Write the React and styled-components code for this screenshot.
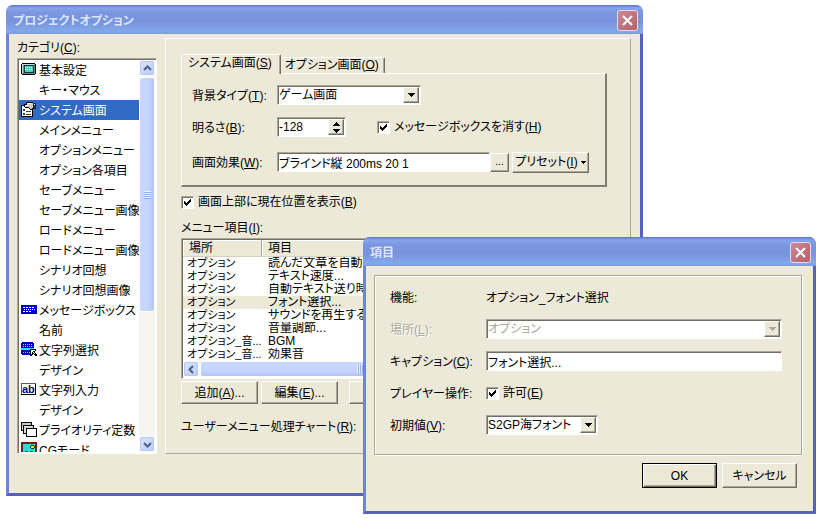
import React from "react";
import styled, { createGlobalStyle, css } from "styled-components";

const categories = [
  { label: "基本設定", icon: "screen" },
  { label: "キー・マウス" },
  { label: "システム画面", icon: "props", selected: true },
  { label: "メインメニュー" },
  { label: "オプションメニュー" },
  { label: "オプション各項目" },
  { label: "セーブメニュー" },
  { label: "セーブメニュー画像" },
  { label: "ロードメニュー" },
  { label: "ロードメニュー画像" },
  { label: "シナリオ回想" },
  { label: "シナリオ回想画像" },
  { label: "メッセージボックス", icon: "message" },
  { label: "名前" },
  { label: "文字列選択", icon: "choice" },
  { label: "デザイン" },
  { label: "文字列入力", icon: "input" },
  { label: "デザイン" },
  { label: "プライオリティ定数", icon: "layers" },
  { label: "CGモード", icon: "picture" },
];

const menuItems = [
  ["オプション", "読んだ文章を自動的"],
  ["オプション", "テキスト速度..."],
  ["オプション", "自動テキスト送り時"],
  ["オプション", "フォント選択..."],
  ["オプション", "サウンドを再生する"],
  ["オプション", "音量調節..."],
  ["オプション_音...", "BGM"],
  ["オプション_音...", "効果音"],
];

const ScreenIcon = () => (
  <svg width="16" height="16" shapeRendering="crispEdges">
    <path d="M1 2h13v1h1v10h-1v1H1v-1H0V3h1z" fill="#000" />
    <path d="M1 3h13v10H1z" fill="#5f8f8f" />
    <path d="M1 3h12v1H2v8H1z" fill="#c8dcdc" />
    <path d="M3 4h10v8H3z" fill="#103838" />
    <path d="M4 5h8v6H4z" fill="#4fd0c0" />
    <path d="M4 6.5h8M4 8.5h8" stroke="#b8fff0" strokeDasharray="1 1" />
  </svg>
);

const PropsIcon = () => (
  <svg width="16" height="16" shapeRendering="crispEdges">
    <path d="M0 4h12v12H0z" fill="#000" />
    <path d="M1 5h10v10H1z" fill="#fff" />
    <path d="M2 8h2v2H2z M5 10h5v1H5z M2 12h2v2H2z M5 13h5v1H5z" fill="#404040" />
    <path d="M5 1h7v1h1v6h-2v1H9V8H8V7H4V6H3V3h2z" fill="#000" />
    <path d="M6 2h6v5h-1v1H9V7H8V6H4V4h2z" fill="#d0ccc0" />
    <path d="M6 2h4v1H6z M4 4h4v1H4z" fill="#fff" />
    <path d="M12 2h3v6h-3z" fill="#102850" />
    <path d="M13 3h1v1h-1z" fill="#fff" />
  </svg>
);

const MessageIcon = () => (
  <svg width="16" height="16" shapeRendering="crispEdges">
    <path d="M0 4h16v9H0z" fill="#0000b8" />
    <path d="M2 6.5h12" stroke="#fff" strokeDasharray="2 1" />
    <path d="M3 8.5h11" stroke="#fff" strokeDasharray="1 1" />
    <path d="M2 10.5h9" stroke="#fff" strokeDasharray="2 1" />
  </svg>
);

const ChoiceIcon = () => (
  <svg width="16" height="16" shapeRendering="crispEdges">
    <path d="M1 1h11v1h1v11h-1v1H1v-1H0V2h1z" fill="#0000c0" />
    <path d="M2 3.5h10M2 5.5h10M2 11.5h8" stroke="#a8c8ff" strokeDasharray="1 1" />
    <path d="M0 7h13v2H0z" fill="#30e0e8" />
    <path d="M9 8h6v2h-1v2h1v1h1v2h-2v-1h-1v-1h-1v1h-1v1H9z" fill="#000" />
    <path d="M10 9h4v1h-2v1h1v1h1v1h-1v-1h-1v-1h-1v2h-1z" fill="#fff" />
  </svg>
);

const InputIcon = () => (
  <svg width="16" height="16" shapeRendering="crispEdges">
    <path d="M0 2h15v12H0z" fill="#000" />
    <path d="M1 3h13v10H1z" fill="#fff" />
    <path d="M0 2h15v1H1v10H0z" fill="#606060" />
    <text x="1" y="12" fontFamily="Liberation Sans" fontWeight="700" fontSize="11" fill="#000080">
      ab
    </text>
  </svg>
);

const LayersIcon = () => (
  <svg width="16" height="16" shapeRendering="crispEdges" stroke="#000">
    <path d="M.5 1.5h10v8H.5z" fill="#c8c8c8" />
    <path d="M2.5 4.5h10v8h-10z" fill="#d8d8d8" />
    <path d="M5.500 7.500h10v8h-10z" fill="#fff" />
  </svg>
);

const PictureIcon = () => (
  <svg width="16" height="16" shapeRendering="crispEdges">
    <path d="M0 1h16v15H0z" fill="#7c1818" />
    <path d="M2 3h12v13H2z" fill="#28dcdc" />
    <path d="M10 4h3v1h1v2h-1v1h-3V7H9V5h1z" fill="#203020" />
    <path d="M10 5h3v2h-3z" fill="#e8e830" />
    <path d="M4 10h3v1h2v-1h3v2h2v4H2v-4h2z" fill="#107030" />
  </svg>
);

const icons = {
  screen: ScreenIcon,
  props: PropsIcon,
  message: MessageIcon,
  choice: ChoiceIcon,
  input: InputIcon,
  layers: LayersIcon,
  picture: PictureIcon,
};

const Chevron = ({ d }) => (
  <svg width="9" height="9">
    <path d={d} fill="none" stroke="#4d6185" strokeWidth="2" />
  </svg>
);

const Triangle = ({ up }) => (
  <svg width="7" height="4" shapeRendering="crispEdges">
    <path d={up ? "M3 0h1v1h1v1h1v1h1v1H0V3h1V2h1V1h1z" : "M0 0h7v1H6v1H5v1H4v1H3V3H2V2H1V1H0z"} fill="currentColor" />
  </svg>
);

const SelectField = ({ id, options, disabled, width }) => (
  <SelectBox $width={width} $disabled={disabled}>
    <select id={id} disabled={disabled}>
      {options.map((option) => (
        <option key={option}>{option}</option>
      ))}
    </select>
    <span className="arrow">
      <Triangle />
    </span>
  </SelectBox>
);

const CheckField = ({ id, children }) => (
  <Check>
    <span className="mark">
      <input type="checkbox" id={id} defaultChecked />
      <svg width="7" height="7" shapeRendering="crispEdges">
        <path d="M0 2h1v1h1v1h1V3h1V2h1V1h1V0h1v3H6v1H5v1H4v1H3v1H2V6H1V5H0z" />
      </svg>
    </span>
    <label htmlFor={id}>{children}</label>
  </Check>
);

const TitleBar = ({ title }) => (
  <Title>
    <h1>{title}</h1>
    <button aria-label="閉じる">
      <svg width="13" height="13">
        <path d="M2 2l9 9M11 2l-9 9" stroke="#fff" strokeWidth="2" />
      </svg>
    </button>
  </Title>
);

const App = () => {
  return (
    <Desktop>
      <GlobalStyle />
      <OptionWindow>
        <TitleBar title="プロジェクトオプション" />
        <OptionBody>
          <Sidebar>
            <Caption id="category">
              カテゴリ(<u>C</u>):
            </Caption>
            <CategoryBox>
              <CategoryList aria-labelledby="category">
                {categories.map(({ label, icon, selected }, i) => {
                  const Icon = icons[icon];
                  return (
                    <CategoryItem key={i} $selected={selected}>
                      <span className="icon">{Icon ? <Icon /> : null}</span>
                      {label}
                    </CategoryItem>
                  );
                })}
              </CategoryList>
              <ScrollBar>
                <button aria-label="上へ">
                  <Chevron d="M1 6l3.5-3.5L8 6" />
                </button>
                <Thumb $size="60%">
                  <i />
                </Thumb>
                <button className="last" aria-label="下へ">
                  <Chevron d="M1 3l3.5 3.5L8 3" />
                </button>
              </ScrollBar>
            </CategoryBox>
          </Sidebar>

          <Page>
            <Tabs role="tablist">
              <Tab role="tab" aria-selected="true" $active>
                システム画面(<u>S</u>)
              </Tab>
              <Tab role="tab" aria-selected="false">
                オプション画面(<u>O</u>)
              </Tab>
            </Tabs>
            <TabPanel>
              <Field>
                <label htmlFor="background">
                  背景タイプ(<u>T</u>):
                </label>
                <SelectField id="background" width="144px" options={["ゲーム画面"]} />
              </Field>
              <Field>
                <label htmlFor="brightness">
                  明るさ(<u>B</u>):
                </label>
                <Spinner>
                  <input id="brightness" defaultValue="-128" />
                  <div>
                    <button aria-label="増やす">
                      <Triangle up />
                    </button>
                    <button aria-label="減らす">
                      <Triangle />
                    </button>
                  </div>
                </Spinner>
                <CheckField id="hide-message">
                  メッセージボックスを消す(<u>H</u>)
                </CheckField>
              </Field>
              <Field $tall>
                <label htmlFor="effect">
                  画面効果(<u>W</u>):
                </label>
                <TextInput id="effect" defaultValue="ブラインド縦 200ms 20 1" />
                <BrowseButton>...</BrowseButton>
                <PresetButton>
                  <span>
                    プリセット(<u>I</u>)
                  </span>
                  <svg width="5" height="3" shapeRendering="crispEdges">
                    <path d="M0 0h5v1H4v1H3v1H2V2H1V1H0z" />
                  </svg>
                </PresetButton>
              </Field>
            </TabPanel>

            <PositionRow>
              <CheckField id="show-position">
                画面上部に現在位置を表示(<u>B</u>)
              </CheckField>
            </PositionRow>
            <Caption id="menu-items">
              メニュー項目(<u>I</u>):
            </Caption>
            <ItemBox>
              <ItemTable aria-labelledby="menu-items">
                <thead>
                  <tr>
                    <th>場所</th>
                    <th>項目</th>
                  </tr>
                </thead>
                <tbody>
                  {menuItems.map(([place, name], i) => (
                    <ItemRow key={i} $selected={i === 3}>
                      <td>{place}</td>
                      <td>{name}</td>
                    </ItemRow>
                  ))}
                </tbody>
              </ItemTable>
              <ScrollBar $horizontal>
                <button aria-label="左へ">
                  <Chevron d="M6 1L2.5 4.5L6 8" />
                </button>
                <Thumb $horizontal $size="76%">
                  <i />
                </Thumb>
                <button className="last" aria-label="右へ">
                  <Chevron d="M3 1l3.5 3.5L3 8" />
                </button>
              </ScrollBar>
            </ItemBox>
            <ItemActions>
              <Button>
                追加(<u>A</u>)...
              </Button>
              <Button>
                編集(<u>E</u>)...
              </Button>
              <Button className="apart" aria-label="削除" />
            </ItemActions>
            <ChartRow>
              <label htmlFor="chart">
                ユーザーメニュー処理チャート(<u>R</u>):
              </label>
              <TextInput id="chart" />
            </ChartRow>
          </Page>
        </OptionBody>
      </OptionWindow>

      <ItemWindow>
        <TitleBar title="項目" />
        <ItemBody>
          <Group>
            <ItemField>
              <span>機能:</span>
              <span>オプション_フォント選択</span>
            </ItemField>
            <ItemField $disabled>
              <label htmlFor="place">
                場所(<u>L</u>):
              </label>
              <SelectField id="place" options={["オプション"]} disabled />
            </ItemField>
            <ItemField>
              <label htmlFor="item-caption">
                キャプション(<u>C</u>):
              </label>
              <TextInput id="item-caption" defaultValue="フォント選択..." />
            </ItemField>
            <ItemField>
              <span>プレイヤー操作:</span>
              <CheckField id="allow">
                許可(<u>E</u>)
              </CheckField>
            </ItemField>
            <ItemField>
              <label htmlFor="initial">
                初期値(<u>V</u>):
              </label>
              <SelectField id="initial" width="112px" options={["S2GP海フォント"]} />
            </ItemField>
          </Group>
          <DialogActions>
            <DialogButton $primary>OK</DialogButton>
            <DialogButton>キャンセル</DialogButton>
          </DialogActions>
        </ItemBody>
      </ItemWindow>
    </Desktop>
  );
};

const GlobalStyle = createGlobalStyle`
  * {
    box-sizing: border-box;
  }
  body {
    margin: 0;
    background-color: #fff;
  }
  body, button, input, select {
    font-family: "Liberation Sans", "Noto Sans CJK JP", sans-serif;
    font-size: 12px;
    font-feature-settings: "palt";
    color: #000;
  }
  u {
    text-underline-offset: 1px;
  }
  svg {
    display: block;
    flex: none;
  }
`;

const raised = css`
  border: 1px solid;
  border-color: #fff #716f64 #716f64 #fff;
  box-shadow: inset -1px -1px #aca899;
  background-color: #ece9d8;
`;

const sunken = css`
  border: 1px solid;
  border-color: #aca899 #fff #fff #aca899;
  box-shadow: inset 1px 1px #716f64;
  background-color: #fff;
`;

const Desktop = styled.main`
  position: relative;
  min-height: 100vh;
  overflow: hidden;
`;

const Window = styled.section`
  position: absolute;
  border: 3px solid #6e83dc;
  border-top: 0;
  border-right-color: #5562c4;
  border-bottom-color: #5562c4;
  border-radius: 7px 7px 0 0;
  background-color: #ece9d8;
`;

const OptionWindow = styled(Window)`
  top: 5px;
  left: 6px;
  right: 176px;
`;

const ItemWindow = styled(Window)`
  top: 237px;
  left: 363px;
  right: 3px;
`;

const Title = styled.header`
  display: flex;
  align-items: center;
  justify-content: space-between;
  height: 29px;
  margin: 0 -3px;
  padding: 2px 5px 0 7px;
  border-radius: 7px 7px 0 0;
  background: linear-gradient(#5a74cc 0, #86a4ec 3px, #7a96df 8px, #7893de 17px, #83a9ea 26px, #7d9ae2 29px);
  h1 {
    margin: 0;
    font-size: 12px;
    line-height: 20px;
    font-weight: 700;
    color: #dce6f8;
  }
  button {
    display: flex;
    align-items: center;
    justify-content: center;
    width: 21px;
    height: 21px;
    padding: 0;
    border: 1px solid #e6d8ee;
    border-radius: 3px;
    background: linear-gradient(135deg, #cc8a94, #b4606c);
  }
`;

const OptionBody = styled.div`
  display: flex;
  gap: 8px;
  padding: 4px 9px 39px 8px;
`;

const Sidebar = styled.div`
  flex: none;
  width: 140px;
`;

const Caption = styled.div`
  line-height: 20px;
`;

const CategoryBox = styled.div`
  ${sunken}
  display: flex;
  height: 396px;
  padding: 1px;
`;

const CategoryList = styled.ul`
  flex: 1;
  min-width: 0;
  margin: 0;
  padding: 0;
  overflow: hidden;
  list-style: none;
`;

const CategoryItem = styled.li`
  display: flex;
  align-items: center;
  gap: 2px;
  height: 20px;
  padding: 0 0 2px 2px;
  white-space: nowrap;
  color: ${({ $selected }) => ($selected ? "#fff" : "#000")};
  background-color: ${({ $selected }) => ($selected ? "#316ac5" : "transparent")};
  .icon {
    flex: none;
    width: 16px;
  }
`;

const ScrollBar = styled.div`
  display: flex;
  flex-direction: ${({ $horizontal }) => ($horizontal ? "row" : "column")};
  flex: none;
  ${({ $horizontal }) => ($horizontal ? "height: 16px;" : "width: 16px;")}
  background-color: #f6f5f0;
  button {
    display: flex;
    flex: none;
    align-items: center;
    justify-content: center;
    width: 16px;
    height: 16px;
    padding: 0;
    border: 1px solid #fff;
    border-radius: 3px;
    outline: 1px solid #b4c8f6;
    outline-offset: -2px;
    background: linear-gradient(135deg, #dce6fe, #b8cbf8);
  }
  .last {
    margin-top: ${({ $horizontal }) => ($horizontal ? "0" : "auto")};
    margin-left: ${({ $horizontal }) => ($horizontal ? "auto" : "0")};
  }
`;

const Thumb = styled.div`
  display: flex;
  align-items: center;
  justify-content: center;
  ${({ $horizontal, $size }) => ($horizontal ? `width: ${$size};` : `height: ${$size};`)}
  margin: ${({ $horizontal }) => ($horizontal ? "0 1px" : "1px 0")};
  border: 1px solid #fff;
  border-radius: 3px;
  background: linear-gradient(
    ${({ $horizontal }) => ($horizontal ? "to bottom" : "to right")},
    #cad8fe,
    #c4d4fc 60%,
    #b2c6f2
  );
  i {
    width: 7px;
    height: 8px;
    background: repeating-linear-gradient(
      ${({ $horizontal }) => ($horizontal ? "to right" : "to bottom")},
      #eef4fe 0 1px,
      #8cb0f8 1px 2px
    );
  }
`;

const Page = styled.div`
  flex: 1;
  min-width: 0;
  padding: 15px 23px 0 15px;
  border: 1px solid;
  border-color: #fff #aca899 #aca899 #fff;
`;

const Tabs = styled.div`
  display: flex;
  align-items: flex-end;
  height: 19px;
`;

const Tab = styled.button`
  height: ${({ $active }) => ($active ? "20px" : "16px")};
  padding: ${({ $active }) => ($active ? "0 8px 3px 6px" : "0 5px 0 4px")};
  margin-bottom: ${({ $active }) => ($active ? "-1px" : "0")};
  border: 0;
  border-left: ${({ $active }) => ($active ? "1px solid #fff" : "0")};
  border-top: 1px solid #fff;
  border-right: 1px solid #716f64;
  box-shadow: inset -1px 0 #aca899;
  border-radius: 2px 2px 0 0;
  background-color: #ece9d8;
  line-height: 15px;
  white-space: nowrap;
`;

const TabPanel = styled.div`
  display: flex;
  flex-direction: column;
  gap: 12px;
  padding: 11px 16px 10px 10px;
  border: 1px solid #fff;
  border-right: 2px solid #807e72;
  border-bottom: 2px solid #807e72;
`;

const Field = styled.div`
  display: flex;
  align-items: center;
  height: ${({ $tall }) => ($tall ? "26px" : "20px")};
  > label {
    flex: none;
    width: 85px;
    padding-bottom: 2px;
  }
`;

const SelectBox = styled.div`
  ${sunken}
  display: grid;
  align-items: stretch;
  width: ${({ $width }) => $width || "100%"};
  height: 20px;
  padding: 1px;
  select {
    grid-area: 1 / 1;
    min-width: 0;
    padding: 0 18px 0 0;
    border: 0;
    appearance: none;
    background: transparent;
    line-height: 16px;
    opacity: 1;
    color: ${({ $disabled }) => ($disabled ? "#aca899" : "#000")};
  }
  .arrow {
    ${raised}
    grid-area: 1 / 1;
    justify-self: end;
    display: flex;
    align-items: center;
    justify-content: center;
    width: 16px;
    pointer-events: none;
    color: ${({ $disabled }) => ($disabled ? "#aca899" : "#000")};
  }
`;

const Spinner = styled.div`
  ${sunken}
  display: flex;
  width: 69px;
  height: 20px;
  margin-right: 31px;
  padding: 1px;
  input {
    flex: 1;
    min-width: 0;
    padding: 0;
    border: 0;
    background: transparent;
  }
  div {
    ${raised}
    display: flex;
    flex-direction: column;
    width: 16px;
  }
  button {
    display: flex;
    flex: 1;
    align-items: center;
    justify-content: center;
    padding: 0;
    border: 0;
    background: transparent;
  }
`;

const Check = styled.div`
  display: flex;
  align-items: center;
  gap: 4px;
  line-height: 20px;
  white-space: nowrap;
  .mark {
    display: grid;
    place-items: center;
  }
  input {
    ${sunken}
    grid-area: 1 / 1;
    width: 13px;
    height: 13px;
    margin: 0;
    appearance: none;
  }
  svg {
    grid-area: 1 / 1;
    visibility: hidden;
    pointer-events: none;
  }
  input:checked + svg {
    visibility: visible;
  }
`;

const TextInput = styled.input`
  ${sunken}
  flex: 1;
  min-width: 0;
  width: 100%;
  height: 20px;
  padding: 0 1px;
`;

const Button = styled.button`
  ${raised}
  flex: none;
  width: 77px;
  height: 23px;
  padding: 0;
  line-height: 18px;
  white-space: nowrap;
`;

const BrowseButton = styled(Button)`
  width: 19px;
  height: 19px;
  font-size: 10px;
  line-height: 12px;
`;

const PresetButton = styled(Button)`
  display: flex;
  align-items: center;
  justify-content: center;
  gap: 3px;
  height: 21px;
  margin-left: 3px;
`;

const PositionRow = styled.div`
  margin: 5px 0 6px;
`;

const ItemBox = styled.div`
  ${sunken}
  padding: 1px;
`;

const ItemTable = styled.table`
  width: 100%;
  table-layout: fixed;
  border-collapse: separate;
  border-spacing: 0;
  th {
    height: 17px;
    padding: 1px 6px 0;
    border-right: 1px solid #aca899;
    border-bottom: 1px solid #d6d2c2;
    background-color: #ece9d8;
    box-shadow: inset 1px 1px #fff;
    font-weight: 400;
    line-height: 15px;
    text-align: left;
  }
  th:first-child {
    width: 79px;
  }
  td {
    height: 13px;
    padding: 0 0 0 4px;
    line-height: 13px;
    white-space: nowrap;
    overflow: hidden;
  }
  td:first-child {
    font-size: 11px;
  }
  td + td {
    padding-left: 6px;
  }
`;

const ItemRow = styled.tr`
  background-color: ${({ $selected }) => ($selected ? "#ece9d8" : "#fff")};
`;

const ItemActions = styled.div`
  display: flex;
  gap: 3px;
  margin-top: 2px;
  .apart {
    margin-left: 8px;
  }
`;

const ChartRow = styled.div`
  display: flex;
  align-items: center;
  gap: 10px;
  margin-top: 13px;
  line-height: 20px;
  white-space: nowrap;
`;

const ItemBody = styled.div`
  padding: 9px 11px 23px 8px;
`;

const Group = styled.div`
  display: flex;
  flex-direction: column;
  gap: 12px;
  padding: 11px 19px 19px 15px;
  border: 1px solid #aca899;
  box-shadow: inset 1px 1px #fff, 1px 1px #fff;
`;

const ItemField = styled.div`
  display: grid;
  grid-template-columns: 96px 1fr;
  align-items: center;
  height: 20px;
  white-space: nowrap;
  color: ${({ $disabled }) => ($disabled ? "#aca899" : "#000")};
  > label,
  > span {
    padding-bottom: 2px;
    text-shadow: ${({ $disabled }) => ($disabled ? "1px 1px #fff" : "none")};
  }
`;

const DialogActions = styled.div`
  display: flex;
  justify-content: flex-end;
  gap: 5px;
  margin-top: 8px;
  padding-right: 5px;
`;

const DialogButton = styled(Button)`
  width: 75px;
  height: 25px;
  ${({ $primary }) =>
    $primary &&
    css`
      border-color: #000;
      box-shadow: inset 1px 1px #fff, inset -1px -1px #716f64, inset -2px -2px #aca899;
    `}
`;

export default App;
